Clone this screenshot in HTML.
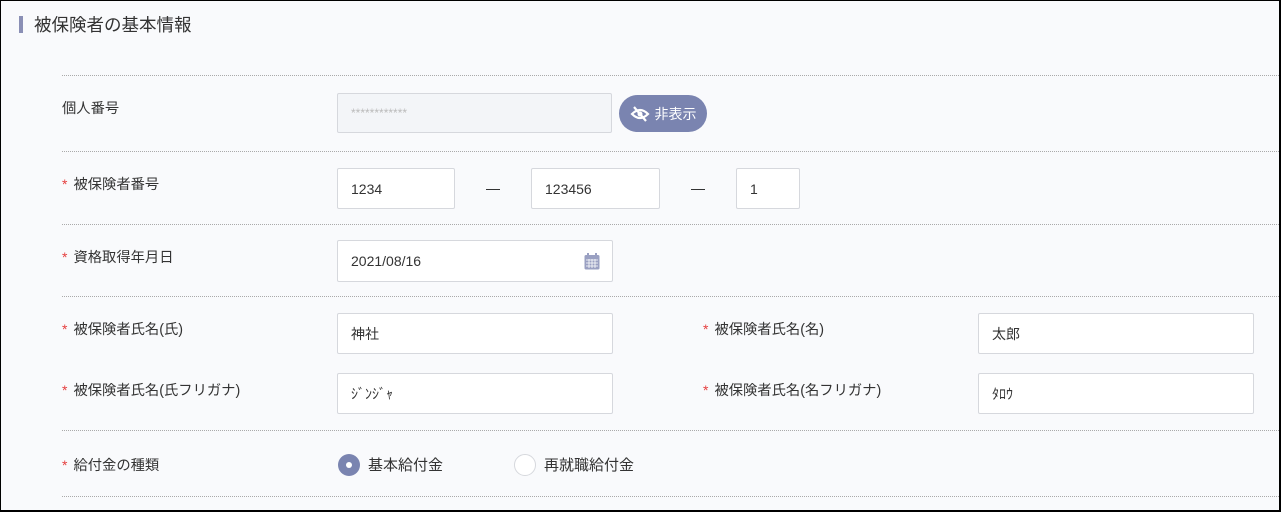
<!DOCTYPE html>
<html><head><meta charset="utf-8"><style>
*{box-sizing:border-box;margin:0;padding:0}
body{width:1281px;height:512px;overflow:hidden;background:#fff;font-family:"Liberation Sans","Noto Sans CJK JP",sans-serif;color:#333}
.frame{position:absolute;left:0;top:0;width:1281px;height:512px;border:1px solid #000;border-right-width:2px;border-bottom-width:2px;background:#f9fafc}
.a{position:absolute}
.title{left:33px;top:11px;font-size:17.5px;color:#333}
.bar{left:18px;top:15px;width:4px;height:17px;background:#8a8fb5}
.hr{position:absolute;left:61px;right:0;border-top:1px dotted #aaa;height:0}
.lbl{position:absolute;font-size:14.3px;color:#333;line-height:20px}
.lbl b{color:#e53e3e;font-weight:normal;margin-right:6px;font-size:14px}
.in{position:absolute;background:#fff;border:1px solid #d6d8dd;border-radius:2px;font-size:14px;padding-left:13px;display:flex;align-items:center;color:#333}
.dash{position:absolute;width:14px;height:1px;background:#333}
</style></head><body><div class="frame">
<div class="a bar"></div><div class="a title">被保険者の基本情報</div>
<div class="hr" style="top:74px"></div>
<div class="hr" style="top:150px"></div>
<div class="hr" style="top:223px"></div>
<div class="hr" style="top:295px"></div>
<div class="hr" style="top:429px"></div>
<div class="hr" style="top:495px"></div>

<div class="lbl" style="left:61px;top:98px">個人番号</div>
<div class="in" style="left:336px;top:92px;width:275px;height:40px;background:#f3f5f8;color:#bbb;font-size:12px">************</div>
<div class="a" style="left:618px;top:94px;width:88px;height:37px;border-radius:19px;background:#7a84b0;color:#fff;font-size:14px;display:flex;align-items:center;justify-content:center;gap:5px">
<svg width="20" height="16" viewBox="0 0 20 16"><path d="M2 8 Q10 0 18 8 Q10 16 2 8Z" fill="none" stroke="#fff" stroke-width="2.2"/><circle cx="10" cy="8" r="2.5" fill="#fff"/><path d="M4 1 L16 15" stroke="#fff" stroke-width="2.2"/></svg>非表示</div>

<div class="lbl" style="left:61px;top:173px"><b>*</b>被保険者番号</div>
<div class="in" style="left:336px;top:167px;width:118px;height:41px">1234</div>
<div class="dash" style="left:485px;top:188px"></div>
<div class="in" style="left:530px;top:167px;width:129px;height:41px">123456</div>
<div class="dash" style="left:690px;top:188px"></div>
<div class="in" style="left:735px;top:167px;width:64px;height:41px">1</div>

<div class="lbl" style="left:61px;top:246px"><b>*</b>資格取得年月日</div>
<div class="in" style="left:336px;top:239px;width:276px;height:42px">2021/08/16
<svg class="a" style="left:246px;top:12px" width="16" height="17" viewBox="0 0 16 17"><rect x="0.5" y="2" width="15" height="14.5" rx="1.5" fill="#9aa0c2"/><rect x="3" y="0" width="2" height="4" fill="#9aa0c2"/><rect x="11" y="0" width="2" height="4" fill="#9aa0c2"/><path d="M2 7h12M2 10h12M2 13h12M5 6v9M8 6v9M11 6v9" stroke="#fff" stroke-width="0.8"/></svg></div>

<div class="lbl" style="left:61px;top:318px"><b>*</b>被保険者氏名(氏)</div>
<div class="in" style="left:336px;top:312px;width:276px;height:41px">神社</div>
<div class="lbl" style="left:702px;top:318px"><b>*</b>被保険者氏名(名)</div>
<div class="in" style="left:977px;top:312px;width:276px;height:41px">太郎</div>

<div class="lbl" style="left:61px;top:379px"><b>*</b>被保険者氏名(氏フリガナ)</div>
<div class="in" style="left:336px;top:372px;width:276px;height:41px">ｼﾞﾝｼﾞｬ</div>
<div class="lbl" style="left:702px;top:379px"><b>*</b>被保険者氏名(名フリガナ)</div>
<div class="in" style="left:977px;top:372px;width:276px;height:41px">ﾀﾛｳ</div>

<div class="lbl" style="left:61px;top:454px"><b>*</b>給付金の種類</div>
<div class="a" style="left:337px;top:453px;width:22px;height:22px;border-radius:50%;background:#7a84b0"></div>
<div class="a" style="left:345px;top:461px;width:6px;height:6px;border-radius:50%;background:#fff"></div>
<div class="lbl" style="left:367px;top:455px;font-size:15px">基本給付金</div>
<div class="a" style="left:513px;top:453px;width:22px;height:22px;border-radius:50%;background:#fff;border:1px solid #d6d8dd"></div>
<div class="lbl" style="left:543px;top:455px;font-size:15px">再就職給付金</div>
</div></body></html>
